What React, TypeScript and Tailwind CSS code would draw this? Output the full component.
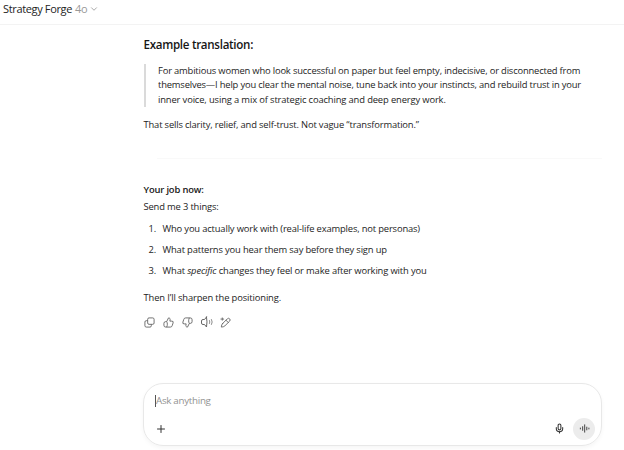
import type { ReactNode } from "react";
import { ChevronDown, Mic, Plus } from "lucide-react";

const steps: ReactNode[] = [
  "Who you actually work with (real-life examples, not personas)",
  "What patterns you hear them say before they sign up",
  <span className="tracking-[-0.14px]">
    What <em>specific</em> changes they feel or make after working with you
  </span>,
];

export default function App() {
  return (
    <div className="flex h-[450px] w-[624px] flex-col overflow-hidden bg-white font-['Open_Sans','Noto_Sans',sans-serif] text-[9.4px] tracking-[-0.16px] text-[#242424]">
      <header className="flex h-[25px] shrink-0 items-center border-b border-[#f3f3f3] pb-[6px] pl-[3px] text-[11px]">
        <span className="tracking-[-0.35px]">Strategy Forge</span>
        <span className="ml-[3px] tracking-[-0.3px] text-[#999]">4o</span>
        <ChevronDown className="ml-[2px] size-[10px] text-[#999]" strokeWidth={2} />
      </header>

      <main className="ml-[143px] flex w-[459px] flex-1 flex-col whitespace-nowrap">
        <h3 className="mt-[12px] pl-[0.5px] text-[11.6px] leading-4 font-semibold tracking-[-0.3px] text-[#161616]">
          Example translation:
        </h3>

        <blockquote className="mt-[11px] ml-px border-l-2 border-[#dadada] pl-[12px] leading-[14.4px]">
          <span className="tracking-[-0.172px]">
            For ambitious women who look successful on paper but feel empty, indecisive, or disconnected from
          </span>
          <br />
          <span className="tracking-[-0.172px]">
            themselves—I help you clear the mental noise, tune back into your instincts, and rebuild trust in your
          </span>
          <br />
          <span className="tracking-[-0.135px]">
            inner voice, using a mix of strategic coaching and deep energy work.
          </span>
        </blockquote>

        <p className="mt-[10px] pl-[0.5px] leading-4">
          That sells clarity, relief, and self-trust. Not vague “transformation.”
        </p>

        <hr className="mt-[25px] ml-[14px] border-[#f9f9f9]" />

        <p className="mt-[23px] pl-[0.5px] leading-4 font-semibold text-[#161616]">Your job now:</p>
        <p className="mt-px pl-[0.5px] leading-4">Send me 3 things:</p>

        <ol className="mt-[5.3px] flex flex-col gap-[5.4px]">
          {steps.map((step, index) => (
            <li key={index} className="flex leading-4">
              <span className="w-[19.5px] pl-[5.5px] font-medium">{index + 1}.</span>
              <span>{step}</span>
            </li>
          ))}
        </ol>

        <p className="mt-[10.4px] pl-[0.5px] leading-4 tracking-[-0.13px]">Then I’ll sharpen the positioning.</p>

        <MessageActions />
        <Composer />
      </main>
    </div>
  );
}

function MessageActions() {
  return (
    <div className="mt-[10.5px] ml-px flex h-3 items-center gap-[8px] text-[#666]">
      <svg viewBox="0 0 24 24" className="size-[11px]" fill="none" stroke="currentColor" strokeWidth="2">
        <rect x="8" y="2" width="14" height="14" rx="3" />
        <path d="M8 8H5a3 3 0 0 0-3 3v8a3 3 0 0 0 3 3h8a3 3 0 0 0 3-3v-3" />
      </svg>
      <svg viewBox="0 0 24 24" className="size-[11px]" fill="none" stroke="currentColor" strokeWidth="2" strokeLinejoin="round">
        <ThumbPath />
      </svg>
      <svg viewBox="0 0 24 24" className="size-[11px] rotate-180" fill="none" stroke="currentColor" strokeWidth="2" strokeLinejoin="round">
        <ThumbPath />
      </svg>
      <svg viewBox="0 0 24 24" className="size-[12px]" fill="none" stroke="currentColor" strokeWidth="2" strokeLinecap="round" strokeLinejoin="round">
        <path d="M11 2 7 7H4a3 3 0 0 0-3 3v4a3 3 0 0 0 3 3h3l4 5q2-10 0-20z" />
        <path d="M17 9q1.500 3 0 6M21 7q3 5 0 10" strokeWidth="1.5" />
      </svg>
      <svg viewBox="0 0 24 24" className="-ml-px size-[11px]" fill="none" stroke="currentColor" strokeWidth="2" strokeLinecap="round" strokeLinejoin="round">
        <path d="m6 14 10-10a3.5 3.5 0 0 1 5 5L11 19c-2 2-5 3-8 3 0-3 1-6 3-8zM13 7l5 5M5 2v5M2 4.5h6" />
      </svg>
    </div>
  );
}

function ThumbPath() {
  return (
    <path d="M8 10 12 2c3 0 4 2 3.500 4L15 9h4a3 3 0 0 1 3 4l-2 6a4 4 0 0 1-4 3H6a4 4 0 0 1-4-4v-4a4 4 0 0 1 4-4zM8 10c2 3 2 8 0 12" />
  );
}

function Composer() {
  return (
    <div className="mt-[54.4px] flex h-[63px] flex-col justify-between rounded-[20px] border border-[#e8e8e8] px-[11px] pt-[11px] pb-[5px] shadow-[0_2px_4px_rgba(0,0,0,0.04)]">
      <div className="flex h-[13px] items-center text-[9.8px] tracking-[-0.3px] text-[#929292]">
        <span className="h-[12px] w-px bg-[#555]" />
        Ask anything
      </div>
      <div className="flex items-center">
        <Plus className="ml-[-0.5px] size-[12px] text-[#333]" strokeWidth={2} />
        <Mic className="ml-auto size-[11px] text-[#333]" strokeWidth={2.3} />
        <button
          aria-label="Voice mode"
          className="mr-[-5px] ml-[8px] flex size-[22px] items-center justify-center rounded-full bg-[#ececec] text-[#333]"
        >
          <svg viewBox="0 0 12 12" className="size-[11px]" stroke="currentColor" strokeLinecap="round">
            <path d="M1.500 5.500v1M4 4v4M6.200 2v8M8.500 4.500v3M10.800 5.500v1" />
          </svg>
        </button>
      </div>
    </div>
  );
}
